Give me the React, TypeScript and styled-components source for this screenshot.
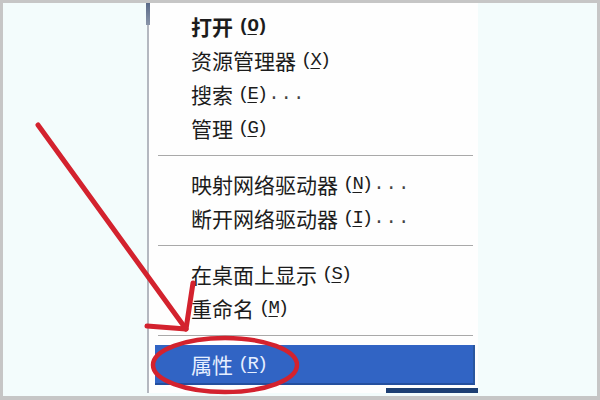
import * as React from "react";
import styled, { createGlobalStyle } from "styled-components";

const GlobalStyle = createGlobalStyle`
    html, body { margin: 0; padding: 0; background: #f3fcfc; }
    #root { width: 600px; height: 400px; }
`;

const Frame = styled.div`
    position: relative;
    box-sizing: border-box;
    width: 600px;
    height: 400px;
    border: 3px solid #c6c6c6;
    border-bottom-width: 4px;
    background: #f3fcfc;
    display: flex;
    align-items: flex-start;
    overflow: hidden;
`;

const Menu = styled.div`
    position: relative;
    margin-left: 144px;
    width: 329px;
    background: #fefefe;
    border-left: 2px solid #b4b8c0;
    padding-top: 6px;
    display: flex;
    flex-direction: column;
    font-family: "Noto Sans CJK SC", "Noto Sans", sans-serif;
    font-size: 21px;
    color: #1c1c1c;
`;

const EdgeMark = styled.div`
    position: absolute;
    left: -3px;
    top: 0;
    width: 4px;
    height: 22px;
    background: linear-gradient(#5a6a88, #8a96aa);
`;

const Item = styled.div<{ $bold?: boolean; $active?: boolean }>`
    height: ${({ $active }) => ($active ? "38px" : "34px")};
    display: flex;
    align-items: center;
    padding-left: ${({ $active }) => ($active ? "36px" : "42px")};
    margin: ${({ $active }) => ($active ? "-2px 3px 0 6px" : "0")};
    font-weight: ${({ $bold }) => ($bold ? 700 : 400)};
    background: ${({ $active }) => ($active ? "#3164c4" : "transparent")};
    border-bottom: ${({ $active }) => ($active ? "2px solid #244f9e" : "none")};
    border-right: ${({ $active }) => ($active ? "2px solid #2a579f" : "none")};
    color: ${({ $active }) => ($active ? "#e6efff" : "#1c1c1c")};
    white-space: nowrap;
`;

const Key = styled.span`
    font-family: "Liberation Mono", "DejaVu Sans Mono", monospace;
    font-size: 19px;
    font-weight: inherit;
    margin-left: 5px;
    letter-spacing: -2px;

    u {
        text-underline-offset: 3px;
    }
`;

const Dots = styled.span`
    font-family: "Liberation Mono", monospace;
    font-size: 19px;
    margin-left: 2px;
    letter-spacing: 1px;
    color: #444;
`;

const Separator = styled.div`
    height: 1px;
    margin: 10px 5px 10px 9px;
    background: #a9a9a9;
    border-bottom: 1px solid #ffffff;
`;

const BottomStrip = styled.div`
    height: 8px;
    display: flex;
    align-items: flex-end;
    justify-content: flex-end;
`;

const TaskbarEdge = styled.div`
    width: 92px;
    height: 5px;
    background: #1d3f73;
`;

const Overlay = styled.svg`
    position: absolute;
    left: -3px;
    top: -3px;
    pointer-events: none;
`;

type Entry = { label: string; key: string; dots?: boolean; bold?: boolean };

const groups: Entry[][] = [
    [
        { label: "打开", key: "O", bold: true },
        { label: "资源管理器", key: "X" },
        { label: "搜索", key: "E", dots: true },
        { label: "管理", key: "G" },
    ],
    [
        { label: "映射网络驱动器", key: "N", dots: true },
        { label: "断开网络驱动器", key: "I", dots: true },
    ],
    [
        { label: "在桌面上显示", key: "S" },
        { label: "重命名", key: "M" },
    ],
];

const Label: React.FC<{ entry: Entry }> = ({ entry }) => (
    <>
        {entry.label}
        <Key>
            (<u>{entry.key}</u>)
        </Key>
        {entry.dots && <Dots>...</Dots>}
    </>
);

export default function App() {
    return (
        <Frame>
            <GlobalStyle />
            <Menu>
                <EdgeMark />
                {groups.map((group, gi) => (
                    <React.Fragment key={gi}>
                        {group.map((entry) => (
                            <Item key={entry.key} $bold={entry.bold}>
                                <Label entry={entry} />
                            </Item>
                        ))}
                        <Separator />
                    </React.Fragment>
                ))}
                <Item $active>
                    <Label entry={{ label: "属性", key: "R" }} />
                </Item>
                <BottomStrip>
                    <TaskbarEdge />
                </BottomStrip>
            </Menu>
            <Overlay width={600} height={400} viewBox="0 0 600 400">
                <g stroke="#d3222e" fill="none" strokeLinecap="round" strokeLinejoin="round">
                    <line x1={38} y1={125} x2={186} y2={329} strokeWidth={5} />
                    <polyline points="193,283 186,329 147,326" strokeWidth={5} />
                    <ellipse cx={225} cy={365} rx={72} ry={27} strokeWidth={4.5} />
                </g>
            </Overlay>
        </Frame>
    );
}
